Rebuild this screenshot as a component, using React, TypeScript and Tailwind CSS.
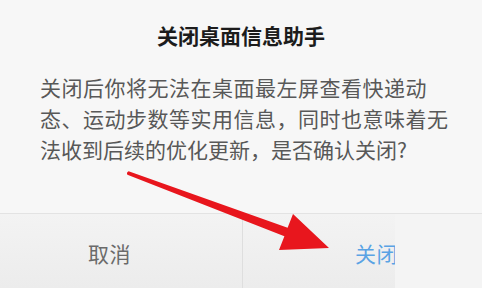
export default function App() {
  const cjk = { fontFamily: '"Noto Sans CJK SC", "Noto Sans", sans-serif' };
  return (
    <div className="relative w-[482px] h-[288px] overflow-hidden bg-[#f7f7f7] flex flex-col" style={cjk}>
      {/* Title */}
      <div className="pt-[21px] text-center text-[21px] leading-[28px] font-bold text-[#1c1c1c]">
        关闭桌面信息助手
      </div>

      {/* Body */}
      <div className="mt-[23px] pl-[40px] text-[21px] leading-[31px] tracking-[0.5px] text-[#585858] whitespace-nowrap">
        <div>关闭后你将无法在桌面最左屏查看快递动</div>
        <div>态、运动步数等实用信息，同时也意味着无</div>
        <div className="tracking-normal">法收到后续的优化更新，是否确认关闭?</div>
      </div>

      {/* Buttons */}
      <div className="mt-auto h-[75px] flex border-t border-[#e3e3e3]">
        <div className="w-[242px] flex items-center pt-[5px] pl-[88px] bg-gradient-to-b from-[#f3f3f3] to-[#ececec] text-[21px] text-[#6a6a6a] tracking-[0.5px]">
          取消
        </div>
        <div className="w-px bg-[#dedede]" />
        <div className="w-[152px] overflow-hidden flex items-center pt-[5px] pl-[112px] bg-gradient-to-b from-[#f3f3f3] to-[#ececec] text-[21px] text-[#5aa3e4] tracking-[0.5px] whitespace-nowrap">
          关闭
        </div>
        <div className="flex-1 bg-[#f4f4f4]" />
      </div>

      {/* Red arrow overlay */}
      <svg className="absolute left-0 top-0" width="482" height="288" viewBox="0 0 482 288">
        <path
          d="M128.6,171.3 L287.6,227.8 L293,214 L329,248 L279,250 L284.4,236.2 L127.4,174.7 Q126,173 128.6,171.3 Z"
          fill="#e8161d"
        />
      </svg>
    </div>
  );
}
